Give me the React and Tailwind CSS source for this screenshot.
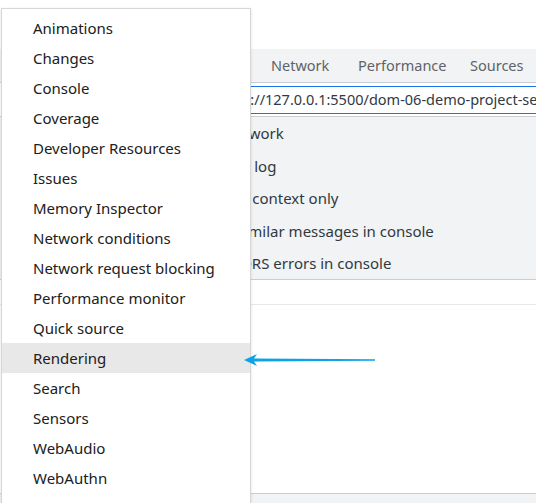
const menuItems = [
  "Animations",
  "Changes",
  "Console",
  "Coverage",
  "Developer Resources",
  "Issues",
  "Memory Inspector",
  "Network conditions",
  "Network request blocking",
  "Performance monitor",
  "Quick source",
  "Rendering",
  "Search",
  "Sensors",
  "WebAudio",
  "WebAuthn",
  "What's New",
];

const consoleOptions = [
  "Hide network",
  "Preserve log",
  "Selected context only",
  "Group similar messages in console",
  "Show CORS errors in console",
];

export default function App() {
  return (
    <div
      className="relative w-[536px] h-[503px] overflow-hidden bg-white text-[15px]"
      style={{ fontFamily: '"Noto Sans", "Liberation Sans", sans-serif' }}
    >
      {/* DEVTOOLS BEHIND THE MENU */}
      <div className="h-[49px]" />

      <div className="flex h-[34px] items-center border-b border-[#cacdd1] bg-[#f1f3f4] text-[14.5px] text-[#5f6368]">
        <div className="w-[271px] shrink-0" />
        <div className="w-[87px] shrink-0 whitespace-nowrap">Network</div>
        <div className="w-[112px] shrink-0 whitespace-nowrap">Performance</div>
        <div className="shrink-0 whitespace-nowrap">Sources</div>
      </div>

      <div className="flex h-[34px] items-start border-b border-[#cacdd1] pt-[3px]">
        <div className="ml-[186px] flex h-[28px] w-[400px] shrink-0 items-center border-y border-[#1a73e8] pl-[36px] text-[14.5px] whitespace-nowrap text-[#303942]">
          http://127.0.0.1:5500/dom-06-demo-project-search/index.html
        </div>
      </div>

      <div className="flex h-[163px] flex-col border-b border-[#cacdd1] bg-[#f1f3f4] text-[#303942]">
        {consoleOptions.map((o) => (
          <div key={o} className="flex h-[32.5px] shrink-0 items-center pl-[189px] whitespace-nowrap">
            {o}
          </div>
        ))}
      </div>

      <div className="h-[25px] border-b border-[#e8e8e8]" />
      <div className="h-[189px] border-b border-[#cacdd1]" />
      <div className="h-[20px] bg-[#f1f3f4]" />

      {/* MORE TOOLS MENU */}
      <div className="absolute left-[1px] top-[8px] w-[250px] border border-[#d6d6d6] bg-white pt-[4px] text-[#202020] shadow-[0_1px_3px_rgba(0,0,0,0.12)]">
        {menuItems.map((item) => (
          <div
            key={item}
            className={
              "flex h-[30px] items-center pl-[31px] whitespace-nowrap " +
              (item === "Rendering" ? "bg-[#e8e8e8]" : "")
            }
          >
            {item}
          </div>
        ))}
      </div>

      {/* ARROW */}
      <svg
        className="absolute left-[240px] top-[350px]"
        width="140"
        height="20"
        viewBox="0 0 140 20"
      >
        <polygon points="4,10 17,4 14,8.6 135,9.2 135,10.8 14,11.6 17,16" fill="#0ba3e6" />
      </svg>
    </div>
  );
}
